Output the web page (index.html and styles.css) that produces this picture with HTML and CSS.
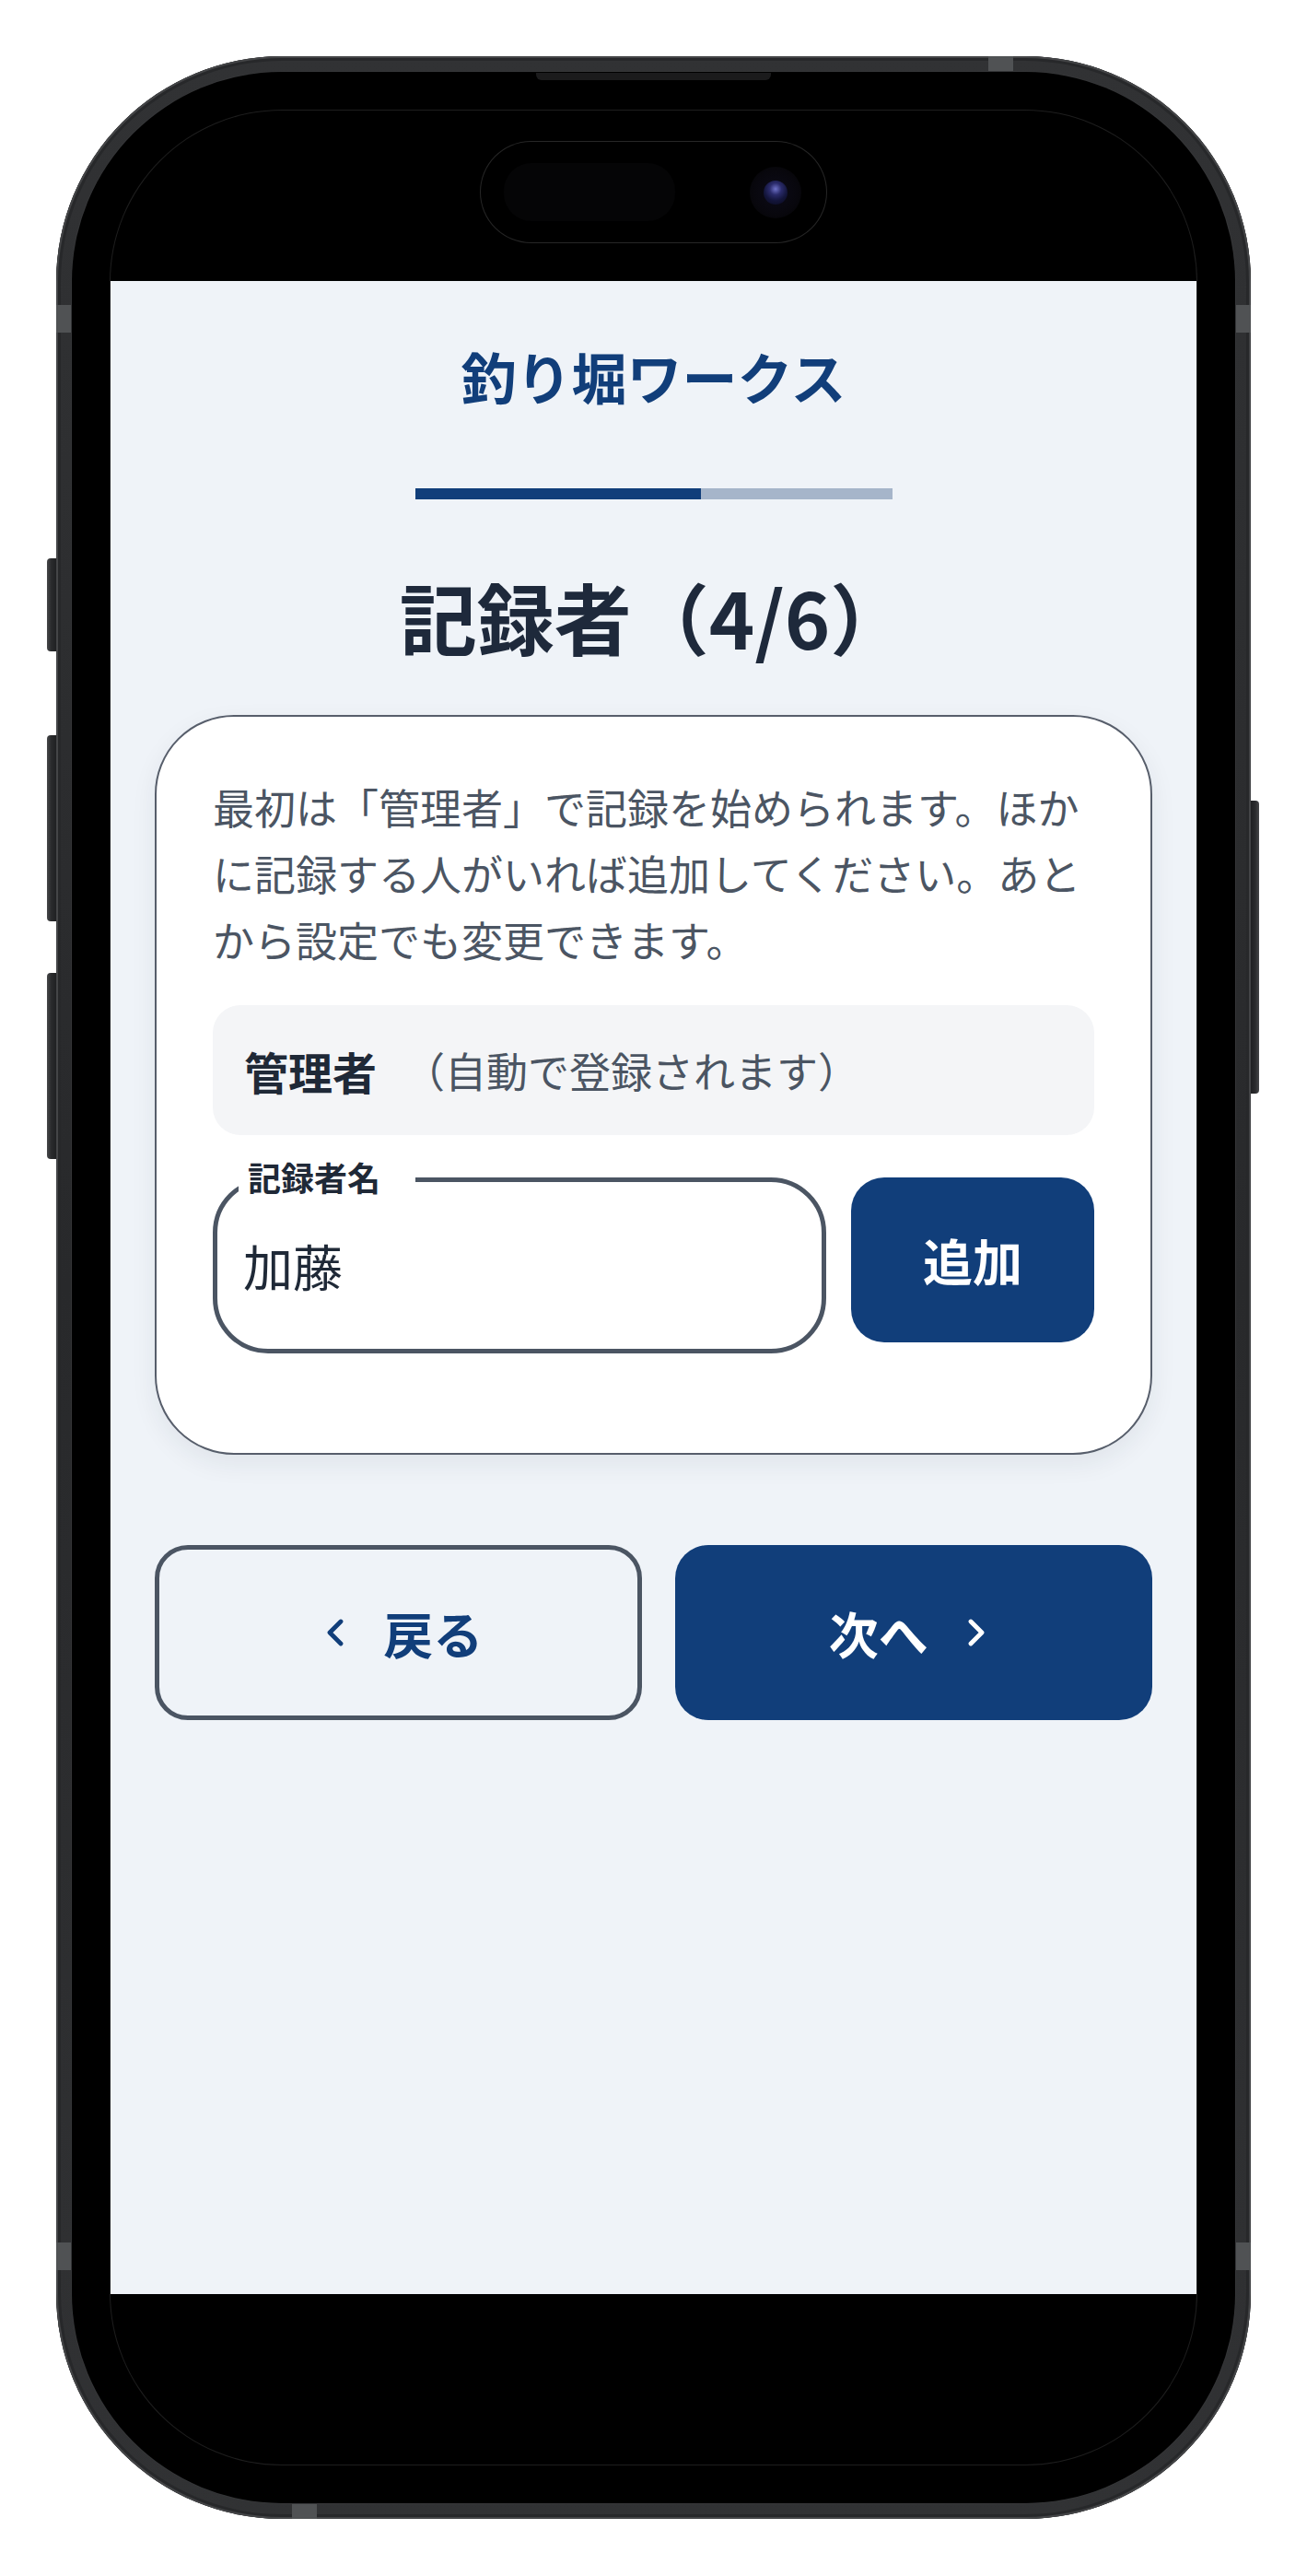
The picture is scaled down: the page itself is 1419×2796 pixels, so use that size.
FILE: index.html
```html
<!DOCTYPE html>
<html lang="ja">
<head>
<meta charset="utf-8">
<title>記録者（4/6）- 釣り堀ワークス</title>
<link rel="stylesheet" href="styles.css">
</head>
<body>
<div class="stage">
  <div class="phone">
    <span class="side-btn side-left btn-action"></span>
    <span class="side-btn side-left btn-vol-up"></span>
    <span class="side-btn side-left btn-vol-down"></span>
    <span class="side-btn side-right btn-power"></span>
    <span class="band band-top"></span>
    <span class="band band-bottom"></span>
    <span class="band band-left band-upper"></span>
    <span class="band band-right band-upper"></span>
    <span class="band band-left band-lower"></span>
    <span class="band band-right band-lower"></span>
    <div class="bezel">
      <span class="speaker"></span>
      <div class="screen">
        <div class="status-area">
          <div class="island">
            <span class="island-sensor"></span>
            <span class="island-camera"><span class="island-lens"></span></span>
          </div>
        </div>
        <main class="app">
          <h1 class="brand">釣り堀ワークス</h1>
          <div class="progress"><div class="progress-fill" style="width:60%"></div></div>
          <h2 class="step-title">記録者（4/6）</h2>
          <section class="card">
            <p class="card-text">最初は「管理者」で記録を始められます。ほかに記録する人がいれば追加してください。あとから設定でも変更できます。</p>
            <div class="admin-row">
              <span class="admin-name">管理者</span>
              <span class="admin-note">（自動で登録されます）</span>
            </div>
            <div class="add-row">
              <label class="field">
                <span class="field-label">記録者名</span>
                <input class="field-input" type="text" value="加藤">
              </label>
              <button class="btn-add" type="button">追加</button>
            </div>
          </section>
          <nav class="nav-row">
            <button class="btn-nav btn-back" type="button">
              <svg class="chev" viewBox="0 0 24 24"><path d="m15 18-6-6 6-6"/></svg>
              <span>戻る</span>
            </button>
            <button class="btn-nav btn-next" type="button">
              <span>次へ</span>
              <svg class="chev" viewBox="0 0 24 24"><path d="m9 18 6-6-6-6"/></svg>
            </button>
          </nav>
        </main>
        <div class="home-area"></div>
      </div>
    </div>
  </div>
</div>
</body>
</html>
```

FILE: styles.css
```css
html, body {
  margin: 0;
  padding: 0;
  background: #ffffff;
}

body {
  font-family: "Noto Sans CJK JP", "Noto Sans", sans-serif;
}

.stage {
  padding: 61px 0 0 61px;
}

/* ---------- phone frame ---------- */
.phone {
  position: relative;
  width: 1297px;
  height: 2673px;
  box-sizing: border-box;
  padding: 17px;
  border-radius: 245px;
  background: linear-gradient(180deg, #313234 0%, #28292b 50%, #313234 100%);
  box-shadow: inset 0 0 0 2px #444547, inset 0 0 0 5px #27282a;
}

.side-btn {
  position: absolute;
  width: 10px;
  background: linear-gradient(90deg, #47484a 0%, #2a2b2d 45%, #1f2022 100%);
}
.side-left {
  left: -10px;
  border-radius: 4px 0 0 4px;
}
.side-right {
  right: -9px;
  width: 9px;
  border-radius: 0 4px 4px 0;
  background: linear-gradient(270deg, #47484a 0%, #2a2b2d 45%, #1f2022 100%);
}
.btn-action { top: 545px; height: 101px; }
.btn-vol-up { top: 737px; height: 202px; }
.btn-vol-down { top: 995px; height: 202px; }
.btn-power { top: 808px; height: 318px; }

.band {
  position: absolute;
  background: #505254;
}
.band-top { top: 0; left: 1012px; width: 27px; height: 17px; }
.band-bottom { bottom: 0; left: 256px; width: 27px; height: 17px; }
.band-left { left: 0; width: 17px; height: 30px; }
.band-right { right: 0; width: 17px; height: 30px; }
.band-upper { top: 270px; }
.band-lower { top: 2373px; }

.bezel {
  position: relative;
  height: 100%;
  box-sizing: border-box;
  padding: 42px;
  border-radius: 228px;
  background: #000000;
  box-shadow: 0 0 0 1px #353638;
}

.speaker {
  position: absolute;
  top: 1px;
  left: 504px;
  width: 255px;
  height: 8px;
  border-radius: 0 0 6px 6px;
  background: #1b1b1c;
}

.screen {
  height: 100%;
  display: flex;
  flex-direction: column;
  border-radius: 186px;
  overflow: hidden;
  background: #000000;
  box-shadow: 0 0 0 1px #1e1e1e;
}

.status-area {
  flex: 0 0 185px;
  box-sizing: border-box;
  padding-top: 34px;
  display: flex;
  justify-content: center;
}

.island {
  width: 375px;
  height: 109px;
  box-sizing: border-box;
  padding: 0 27px 0 25px;
  border-radius: 55px;
  background: #000000;
  box-shadow: 0 0 0 1px #262626;
  display: flex;
  align-items: center;
  justify-content: space-between;
}

.island-sensor {
  width: 186px;
  height: 63px;
  border-radius: 30px;
  background: #050506;
}

.island-camera {
  width: 56px;
  height: 56px;
  border-radius: 50%;
  background: radial-gradient(circle, #0c0b18 0%, #08070d 60%, #030303 100%);
  display: flex;
  align-items: center;
  justify-content: center;
}

.island-lens {
  width: 26px;
  height: 26px;
  border-radius: 50%;
  background: radial-gradient(circle at 50% 35%, #6f72c8 0%, #2a2b6a 30%, #13153a 60%, #0a0a1c 100%);
}

.home-area {
  flex: 1 1 auto;
}

/* ---------- app ---------- */
.app {
  flex: 0 0 2185px;
  box-sizing: border-box;
  padding: 58px 48px 0;
  background: #eff3f8;
}

.brand {
  margin: 0;
  font-size: 60px;
  line-height: 90px;
  font-weight: 700;
  color: #113e7a;
  text-align: center;
}

.progress {
  width: 518px;
  height: 12px;
  margin: 77px auto 0;
  background: #a6b5ca;
}

.progress-fill {
  height: 100%;
  background: #113e7a;
}

.step-title {
  margin: 72px 0 0;
  font-size: 84px;
  line-height: 109px;
  font-weight: 700;
  color: #1e293b;
  text-align: center;
}

.card {
  margin-top: 53px;
  padding: 62px 61px 108px;
  border: 2px solid #575e6b;
  border-radius: 86px;
  background: #ffffff;
  box-shadow: 0 10px 28px rgba(30, 41, 59, 0.07);
}

.card-text {
  margin: 0;
  font-size: 45px;
  line-height: 72px;
  color: #4b5563;
}

.admin-row {
  margin-top: 35px;
  height: 141px;
  box-sizing: border-box;
  padding-left: 34px;
  border-radius: 30px;
  background: #f4f5f7;
  display: flex;
  align-items: center;
}

.admin-name {
  font-size: 48px;
  font-weight: 700;
  color: #1f2937;
}

.admin-note {
  margin-left: 29px;
  font-size: 45px;
  color: #4b5563;
}

.add-row {
  margin-top: 46px;
  display: flex;
  align-items: flex-start;
  gap: 27px;
}

.field {
  position: relative;
  flex: 1 1 auto;
  height: 191px;
  box-sizing: border-box;
  padding-left: 28px;
  border: 5px solid #4b5563;
  border-radius: 60px;
  background: #ffffff;
  display: flex;
  align-items: center;
}

.field-label {
  position: absolute;
  top: -26px;
  left: 23px;
  padding: 0 38px 0 10px;
  font-size: 36px;
  line-height: 40px;
  font-weight: 700;
  color: #1f2937;
  background: #ffffff;
}

.field-input {
  width: 100%;
  border: 0;
  outline: none;
  padding: 0;
  background: transparent;
  font-family: "Noto Sans CJK JP", "Noto Sans", sans-serif;
  font-size: 54px;
  line-height: 54px;
  color: #1f2937;
}

.btn-add {
  flex: 0 0 264px;
  height: 179px;
  border: 0;
  border-radius: 36px;
  background: #113e7a;
  color: #ffffff;
  font-family: "Noto Sans CJK JP", "Noto Sans", sans-serif;
  font-size: 54px;
  font-weight: 700;
}

.nav-row {
  margin-top: 98px;
  display: flex;
  gap: 36px;
}

.btn-nav {
  flex: 1 1 0;
  height: 190px;
  box-sizing: border-box;
  border-radius: 36px;
  display: flex;
  align-items: center;
  justify-content: center;
  gap: 28px;
  font-family: "Noto Sans CJK JP", "Noto Sans", sans-serif;
  font-size: 54px;
  font-weight: 700;
  padding: 0;
}

.btn-back {
  border: 5px solid #4b5563;
  background: transparent;
  color: #113e7a;
}

.btn-next {
  border: 0;
  background: #113e7a;
  color: #ffffff;
}

.chev {
  width: 48px;
  height: 48px;
  fill: none;
  stroke: currentColor;
  stroke-width: 2.4;
  stroke-linecap: round;
  stroke-linejoin: round;
}
```
